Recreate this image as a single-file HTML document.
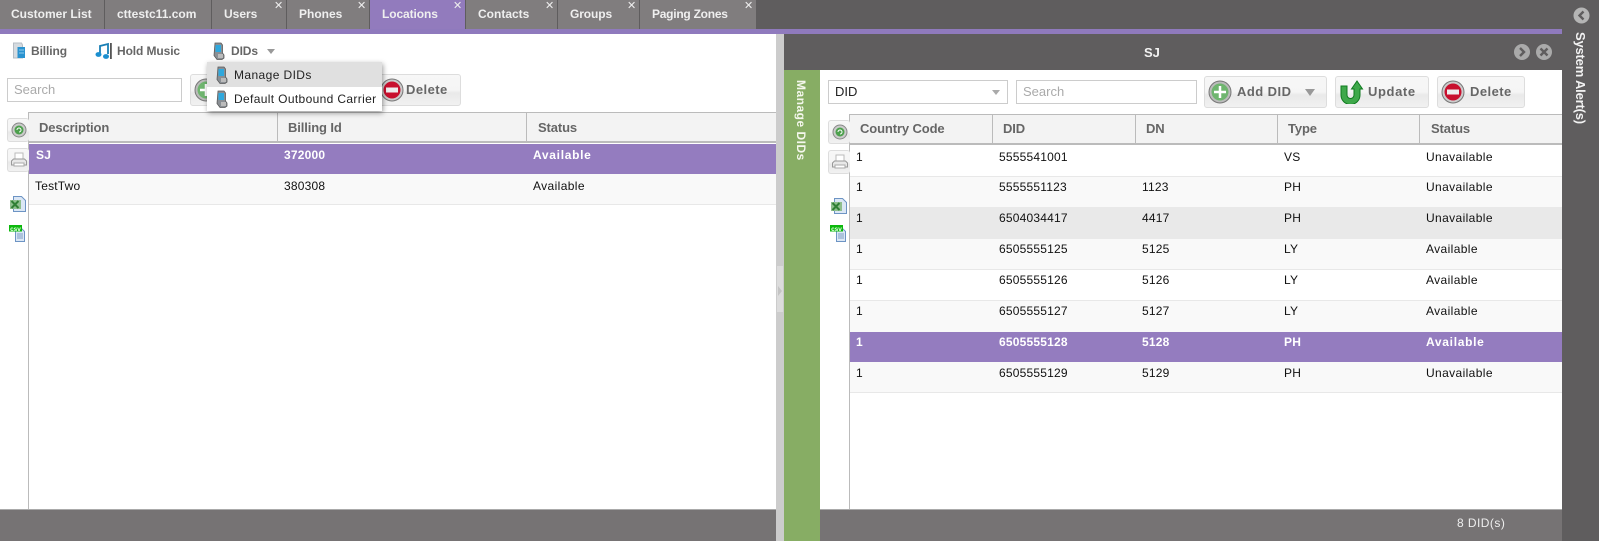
<!DOCTYPE html>
<html><head><meta charset="utf-8"><title>Locations</title>
<style>
html,body{margin:0;padding:0;width:1599px;height:541px;overflow:hidden;background:#5f5d5e;font-family:"Liberation Sans",Arial,sans-serif;font-size:12px}
.a,.t,.x,.c,.r,.h,.b,.i{position:absolute}
.a{display:block}
.t{top:0;height:29px;line-height:28px;background:#807d7e;color:#efefef;font-weight:bold;text-align:left;white-space:nowrap;box-sizing:border-box}
.t.on{background:#927bbd}
.x{top:0;color:#eee;font-size:11px;line-height:12px;font-weight:normal;letter-spacing:0}
.h{font-weight:bold;color:#666;font-size:13px;line-height:16px;white-space:nowrap;letter-spacing:-.12px}
.c{color:#111;line-height:14px;white-space:nowrap;letter-spacing:.2px}
.w{letter-spacing:.38px}
.s .c{color:#fff;font-weight:bold}
.s .w{letter-spacing:.7px}
.b{background:linear-gradient(#f7f7f7 0,#f5f5f5 50%,#e9e9e9 60%,#f1f1f1 100%);border:1px solid #ddd;border-radius:3px;box-sizing:border-box}
.l{position:absolute;font-weight:bold;font-size:13px;color:#666;line-height:16px;white-space:nowrap;letter-spacing:.45px}
.m{position:absolute;color:#666;font-weight:bold;line-height:14px;white-space:nowrap;letter-spacing:-.1px}
.i{display:block}
</style></head><body>

<!-- tabs -->
<div class="t" style="left:0;width:104px;padding-left:11px">Customer List</div>
<div class="t" style="left:105px;width:106px;padding-left:12px">cttestc11.com</div>
<div class="t" style="left:212px;width:74px;padding-left:12px">Users<span class="x" style="left:62px">✕</span></div>
<div class="t" style="left:287px;width:82px;padding-left:12px">Phones<span class="x" style="left:70px">✕</span></div>
<div class="t on" style="left:370px;width:95px;padding-left:12px;letter-spacing:-.1px">Locations<span class="x" style="left:83px">✕</span></div>
<div class="t" style="left:466px;width:91px;padding-left:12px">Contacts<span class="x" style="left:79px">✕</span></div>
<div class="t" style="left:558px;width:81px;padding-left:12px;letter-spacing:-.1px">Groups<span class="x" style="left:69px">✕</span></div>
<div class="t" style="left:640px;width:116px;padding-left:12px;letter-spacing:-.25px">Paging Zones<span class="x" style="left:104px">✕</span></div>
<div class="a" style="left:0;top:29px;width:1562px;height:5px;background:#8f7abd"></div>

<!-- left panel -->
<div class="a" style="left:0;top:34px;width:776px;height:476px;background:#fff"></div>
<div class="a" style="left:776px;top:34px;width:8px;height:507px;background:#ccc"></div>
<div class="a" style="left:777px;top:266px;width:6px;height:46px;background:#dcdcdc"></div>
<svg class="i" style="left:777px;top:285px" width="6" height="12"><path d="M1 1l4 5-4 5z" fill="#c4c4c4"/></svg>

<!-- left toolbar -->
<svg class="i" style="left:12px;top:42px" width="14" height="18"><path d="M1.500 1h8l1 2v13h-9z" fill="#d5dbe0" stroke="#b5bcc4"/><rect x="5.500" y="5" width="7.500" height="11" fill="#2a93d0"/><path d="M7 8h5M7 11h5" stroke="#8fcbec"/></svg>
<div class="m" style="left:31px;top:44px">Billing</div>
<svg class="i" style="left:95px;top:42px" width="18" height="18"><path d="M5 13V4l8-2v10" fill="none" stroke="#1a7fb5" stroke-width="1.8"/><ellipse cx="3.500" cy="12.500" rx="3" ry="2.400" fill="#1b8fd0"/><ellipse cx="11" cy="14.500" rx="3" ry="2.400" fill="#1b8fd0"/><rect x="15" y="1" width="1.800" height="16" fill="#555"/></svg>
<div class="m" style="left:117px;top:44px">Hold Music</div>
<svg class="i" style="left:212px;top:42px" width="14" height="18"><path d="M3 1h6l1.500 2v8l1.500 2v3l-2 1.500H5l-3-4z" fill="#8a8f94" stroke="#5a5a5a" stroke-width=".8"/><rect x="3.500" y="3" width="5.500" height="7" fill="#2fa8dd"/><rect x="6" y="12" width="5" height="4" fill="#bbb"/></svg>
<div class="m" style="left:231px;top:44px">DIDs</div>
<svg class="i" style="left:267px;top:49px" width="9" height="6"><path d="M0 0h8l-4 5z" fill="#999"/></svg>

<div class="a" style="left:7px;top:78px;width:175px;height:24px;border:1px solid #ccc;box-sizing:border-box;background:#fff;color:#aaa;font-size:13px;line-height:22px;padding-left:6px">Search</div>

<div class="b" style="left:190px;top:74px;width:60px;height:32px"></div>
<svg class="i" style="left:194px;top:78px" width="24" height="24"><circle cx="12" cy="12" r="11" fill="#bbb" stroke="#777"/><circle cx="12" cy="12" r="8.500" fill="#6fb56f"/><path d="M12 6v12M6 12h12" stroke="#fff" stroke-width="2.500"/></svg>
<div class="b" style="left:378px;top:74px;width:83px;height:32px"></div>
<svg class="i" style="left:380px;top:78px" width="24" height="24"><circle cx="12" cy="12" r="11" fill="#ccc" stroke="#777"/><circle cx="12" cy="12" r="8.500" fill="#c8102e"/><rect x="6" y="9.500" width="12" height="5" fill="#eee"/></svg>
<div class="l" style="left:406px;top:82px">Delete</div>

<!-- left grid -->
<div class="a" style="left:28px;top:112px;width:748px;height:31px;background:#f3f3f3;border-top:1px solid #bbb;border-bottom:2px solid #bbb;box-sizing:border-box"></div>
<div class="a" style="left:28px;top:112px;width:1px;height:398px;background:#bbb"></div>
<div class="a" style="left:277px;top:113px;width:1px;height:29px;background:#bbb"></div>
<div class="a" style="left:526px;top:113px;width:1px;height:29px;background:#bbb"></div>
<div class="h" style="left:39px;top:120px">Description</div>
<div class="h" style="left:288px;top:120px">Billing Id</div>
<div class="h" style="left:538px;top:120px">Status</div>
<div class="s"><div class="a" style="left:29px;top:144px;width:747px;height:30px;background:#947cbf"></div>
<div class="c" style="left:36px;top:148px">SJ</div><div class="c" style="left:284px;top:148px">372000</div><div class="c w" style="left:533px;top:148px">Available</div></div>
<div class="a" style="left:29px;top:174px;width:747px;height:31px;background:#f9f9f9;border-bottom:1px solid #e8e8e8;box-sizing:border-box"></div>
<div class="c" style="left:35px;top:179px">TestTwo</div><div class="c" style="left:284px;top:179px">380308</div><div class="c w" style="left:533px;top:179px">Available</div>

<!-- left side tools -->
<div class="b" style="left:7px;top:118px;width:22px;height:24px;border-right:0"></div>
<svg class="i" style="left:11px;top:122px" width="16" height="16"><circle cx="8" cy="8" r="7" fill="#ccc" stroke="#888"/><circle cx="8" cy="8" r="4.500" fill="#4da04d"/><path d="M6 8a2 2 0 1 1 2 2" fill="none" stroke="#fff"/></svg>
<div class="b" style="left:7px;top:148px;width:22px;height:24px;border-right:0"></div>
<svg class="i" style="left:10px;top:152px" width="18" height="16"><rect x="5" y="1" width="8" height="6" fill="#fff" stroke="#bbb"/><path d="M1.500 13V9l2-2h11l2 2v4z" fill="#e8e8e8" stroke="#999"/><rect x="4" y="11" width="10" height="3" fill="#fff" stroke="#aaa"/></svg>
<svg class="i" style="left:10px;top:196px" width="16" height="16"><path d="M3.500 .5h8l4 4v11h-12z" fill="#dbe7f5" stroke="#6d94c4"/><rect x="0" y="4" width="11" height="9" fill="#8fbf8f"/><path d="M1.500 5l7 7M8.500 5l-7 7" stroke="#2f7f35" stroke-width="2"/></svg>
<svg class="i" style="left:9px;top:225px" width="17" height="17"><path d="M6.500 3.500h6l3 3v10h-9z" fill="#dbe7f5" stroke="#6d94c4"/><path d="M8 9h6M8 11h6M8 13h6" stroke="#7d9cc4"/><rect x="0" y="0" width="13" height="6.500" fill="#0cb80c"/><text x="6.500" y="6" font-size="6.500" font-weight="bold" fill="#e8ffe8" text-anchor="middle" font-family="Liberation Sans">csv</text></svg>

<!-- menu -->
<div class="a" style="left:207px;top:62px;width:175px;height:49px;background:#fff;box-shadow:1px 2px 5px rgba(0,0,0,.4)"></div>
<div class="a" style="left:207px;top:62px;width:175px;height:25px;background:#e0e0e0"></div>
<svg class="i" style="left:215px;top:66px" width="14" height="18"><path d="M3 1h6l1.500 2v8l1.500 2v3l-2 1.500H5l-3-4z" fill="#8a8f94" stroke="#5a5a5a" stroke-width=".8"/><rect x="3.500" y="3" width="5.500" height="7" fill="#2fa8dd"/><rect x="6" y="12" width="5" height="4" fill="#bbb"/></svg>
<svg class="i" style="left:215px;top:90px" width="14" height="18"><path d="M3 1h6l1.500 2v8l1.500 2v3l-2 1.500H5l-3-4z" fill="#8a8f94" stroke="#5a5a5a" stroke-width=".8"/><rect x="3.500" y="3" width="5.500" height="7" fill="#2fa8dd"/><rect x="6" y="12" width="5" height="4" fill="#bbb"/></svg>
<div class="c" style="left:234px;top:68px;letter-spacing:.4px;color:#222">Manage DIDs</div>
<div class="c" style="left:234px;top:92px;letter-spacing:.35px;color:#222">Default Outbound Carrier</div>

<!-- left footer -->
<div class="a" style="left:0;top:509px;width:776px;height:32px;background:#767374;border-top:1px solid #aaa;box-sizing:border-box"></div>

<!-- right panel -->
<div class="a" style="left:784px;top:34px;width:778px;height:36px;background:#5f5d5e"></div>
<div class="a" style="left:1144px;top:45px;color:#f2f2f2;font-weight:bold;line-height:15px;font-size:13px">SJ</div>
<svg class="i" style="left:1513px;top:43px" width="40" height="18"><circle cx="9" cy="9" r="8" fill="#aaa"/><path d="M7 5l4 4-4 4" fill="none" stroke="#5f5d5e" stroke-width="2.400"/><circle cx="31" cy="9" r="8" fill="#aaa"/><path d="M27.500 5.500l7 7M34.500 5.500l-7 7" stroke="#5f5d5e" stroke-width="2.400"/></svg>
<div class="a" style="left:784px;top:70px;width:36px;height:471px;background:#87ad64"></div>
<div class="a" style="left:820px;top:70px;width:742px;height:439px;background:#fff"></div>
<div class="a" style="left:792px;top:80px;writing-mode:vertical-rl;color:#f4f7ec;font-weight:bold;line-height:18px;white-space:nowrap;letter-spacing:.5px">Manage DIDs</div>

<!-- right toolbar -->
<div class="a" style="left:828px;top:80px;width:180px;height:24px;border:1px solid #ccc;box-sizing:border-box;color:#222;font-size:13px;line-height:22px;padding-left:6px">DID</div>
<svg class="i" style="left:992px;top:90px" width="9" height="6"><path d="M0 0h8l-4 5z" fill="#aaa"/></svg>
<div class="a" style="left:1016px;top:80px;width:181px;height:24px;border:1px solid #ccc;box-sizing:border-box;color:#aaa;font-size:13px;line-height:22px;padding-left:6px">Search</div>

<div class="b" style="left:1204px;top:76px;width:123px;height:32px"></div>
<svg class="i" style="left:1208px;top:80px" width="24" height="24"><circle cx="12" cy="12" r="11" fill="#bbb" stroke="#777"/><circle cx="12" cy="12" r="8.500" fill="#6fb56f"/><path d="M12 6v12M6 12h12" stroke="#fff" stroke-width="2.500"/></svg>
<div class="l" style="left:1237px;top:84px">Add DID</div>
<svg class="i" style="left:1305px;top:89px" width="11" height="8"><path d="M0 0h10l-5 7z" fill="#999"/></svg>

<div class="b" style="left:1335px;top:76px;width:94px;height:32px"></div>
<svg class="i" style="left:1340px;top:80px" width="24" height="24"><path d="M1 6h6v9a3.500 3.500 0 0 0 7 0V9h-2.500L17 1l5.500 8H20v6a9.500 9.500 0 0 1-19 0z" fill="#3ea84a" stroke="#0f7a1f"/></svg>
<div class="l" style="left:1368px;top:84px;letter-spacing:.6px">Update</div>

<div class="b" style="left:1437px;top:76px;width:88px;height:32px"></div>
<svg class="i" style="left:1441px;top:80px" width="24" height="24"><circle cx="12" cy="12" r="11" fill="#ccc" stroke="#777"/><circle cx="12" cy="12" r="8.500" fill="#c8102e"/><rect x="6" y="9.500" width="12" height="5" fill="#eee"/></svg>
<div class="l" style="left:1470px;top:84px">Delete</div>

<!-- right grid -->
<div class="a" style="left:849px;top:114px;width:713px;height:31px;background:#f3f3f3;border-top:1px solid #bbb;border-bottom:2px solid #bbb;box-sizing:border-box"></div>
<div class="a" style="left:849px;top:114px;width:1px;height:395px;background:#bbb"></div>
<div class="a" style="left:992px;top:115px;width:1px;height:29px;background:#bbb"></div>
<div class="a" style="left:1135px;top:115px;width:1px;height:29px;background:#bbb"></div>
<div class="a" style="left:1277px;top:115px;width:1px;height:29px;background:#bbb"></div>
<div class="a" style="left:1419px;top:115px;width:1px;height:29px;background:#bbb"></div>
<div class="h" style="left:860px;top:121px">Country Code</div>
<div class="h" style="left:1003px;top:121px">DID</div>
<div class="h" style="left:1146px;top:121px">DN</div>
<div class="h" style="left:1288px;top:121px">Type</div>
<div class="h" style="left:1431px;top:121px">Status</div>

<div class="a" style="left:850px;top:176px;width:712px;height:31px;background:#f9f9f9;border-top:1px solid #e8e8e8;box-sizing:border-box"></div>
<div class="a" style="left:850px;top:207px;width:712px;height:32px;background:#e9e9e9"></div>
<div class="a" style="left:850px;top:239px;width:712px;height:31px;background:#f9f9f9;border-bottom:1px solid #e8e8e8;box-sizing:border-box"></div>
<div class="a" style="left:850px;top:270px;width:712px;height:31px;background:#fff;border-bottom:1px solid #e8e8e8;box-sizing:border-box"></div>
<div class="a" style="left:850px;top:301px;width:712px;height:31px;background:#f9f9f9"></div>
<div class="a" style="left:850px;top:332px;width:712px;height:30px;background:#947cbf"></div>
<div class="a" style="left:850px;top:362px;width:712px;height:31px;background:#f9f9f9;border-bottom:1px solid #e8e8e8;box-sizing:border-box"></div>

<div class="c" style="left:856px;top:150px">1</div><div class="c" style="left:999px;top:150px">5555541001</div><div class="c" style="left:1284px;top:150px">VS</div><div class="c w" style="left:1426px;top:150px">Unavailable</div>
<div class="c" style="left:856px;top:180px">1</div><div class="c" style="left:999px;top:180px">5555551123</div><div class="c" style="left:1142px;top:180px">1123</div><div class="c" style="left:1284px;top:180px">PH</div><div class="c w" style="left:1426px;top:180px">Unavailable</div>
<div class="c" style="left:856px;top:211px">1</div><div class="c" style="left:999px;top:211px">6504034417</div><div class="c" style="left:1142px;top:211px">4417</div><div class="c" style="left:1284px;top:211px">PH</div><div class="c w" style="left:1426px;top:211px">Unavailable</div>
<div class="c" style="left:856px;top:242px">1</div><div class="c" style="left:999px;top:242px">6505555125</div><div class="c" style="left:1142px;top:242px">5125</div><div class="c" style="left:1284px;top:242px">LY</div><div class="c w" style="left:1426px;top:242px">Available</div>
<div class="c" style="left:856px;top:273px">1</div><div class="c" style="left:999px;top:273px">6505555126</div><div class="c" style="left:1142px;top:273px">5126</div><div class="c" style="left:1284px;top:273px">LY</div><div class="c w" style="left:1426px;top:273px">Available</div>
<div class="c" style="left:856px;top:304px">1</div><div class="c" style="left:999px;top:304px">6505555127</div><div class="c" style="left:1142px;top:304px">5127</div><div class="c" style="left:1284px;top:304px">LY</div><div class="c w" style="left:1426px;top:304px">Available</div>
<div class="s"><div class="c" style="left:856px;top:335px">1</div><div class="c" style="left:999px;top:335px">6505555128</div><div class="c" style="left:1142px;top:335px">5128</div><div class="c" style="left:1284px;top:335px">PH</div><div class="c w" style="left:1426px;top:335px">Available</div></div>
<div class="c" style="left:856px;top:366px">1</div><div class="c" style="left:999px;top:366px">6505555129</div><div class="c" style="left:1142px;top:366px">5129</div><div class="c" style="left:1284px;top:366px">PH</div><div class="c w" style="left:1426px;top:366px">Unavailable</div>

<!-- right side tools -->
<div class="b" style="left:828px;top:120px;width:22px;height:24px;border-right:0"></div>
<svg class="i" style="left:832px;top:124px" width="16" height="16"><circle cx="8" cy="8" r="7" fill="#ccc" stroke="#888"/><circle cx="8" cy="8" r="4.500" fill="#4da04d"/><path d="M6 8a2 2 0 1 1 2 2" fill="none" stroke="#fff"/></svg>
<div class="b" style="left:828px;top:150px;width:22px;height:24px;border-right:0"></div>
<svg class="i" style="left:831px;top:154px" width="18" height="16"><rect x="5" y="1" width="8" height="6" fill="#fff" stroke="#bbb"/><path d="M1.500 13V9l2-2h11l2 2v4z" fill="#e8e8e8" stroke="#999"/><rect x="4" y="11" width="10" height="3" fill="#fff" stroke="#aaa"/></svg>
<svg class="i" style="left:831px;top:198px" width="16" height="16"><path d="M3.500 .5h8l4 4v11h-12z" fill="#dbe7f5" stroke="#6d94c4"/><rect x="0" y="4" width="11" height="9" fill="#8fbf8f"/><path d="M1.500 5l7 7M8.500 5l-7 7" stroke="#2f7f35" stroke-width="2"/></svg>
<svg class="i" style="left:830px;top:225px" width="17" height="17"><path d="M6.500 3.500h6l3 3v10h-9z" fill="#dbe7f5" stroke="#6d94c4"/><path d="M8 9h6M8 11h6M8 13h6" stroke="#7d9cc4"/><rect x="0" y="0" width="13" height="6.500" fill="#0cb80c"/><text x="6.500" y="6" font-size="6.500" font-weight="bold" fill="#e8ffe8" text-anchor="middle" font-family="Liberation Sans">csv</text></svg>

<!-- right footer -->
<div class="a" style="left:820px;top:509px;width:742px;height:32px;background:#767374;border-top:1px solid #aaa;box-sizing:border-box"></div>
<div class="a" style="left:1457px;top:516px;color:#eee;line-height:14px;letter-spacing:.45px">8 DID(s)</div>

<!-- system alerts -->
<div class="a" style="left:1562px;top:0;width:37px;height:541px;background:#5f5d5e"></div>
<svg class="i" style="left:1573px;top:7px" width="17" height="17"><circle cx="8.500" cy="8.500" r="8" fill="#b5b5b5"/><path d="M10.500 4.500l-4 4 4 4" fill="none" stroke="#5f5d5e" stroke-width="2.400"/></svg>
<div class="a" style="left:1571px;top:32px;writing-mode:vertical-rl;color:#f2f2f2;font-weight:bold;font-size:13px;line-height:18px;white-space:nowrap;letter-spacing:-.2px">System Alert(s)</div>

</body></html>
